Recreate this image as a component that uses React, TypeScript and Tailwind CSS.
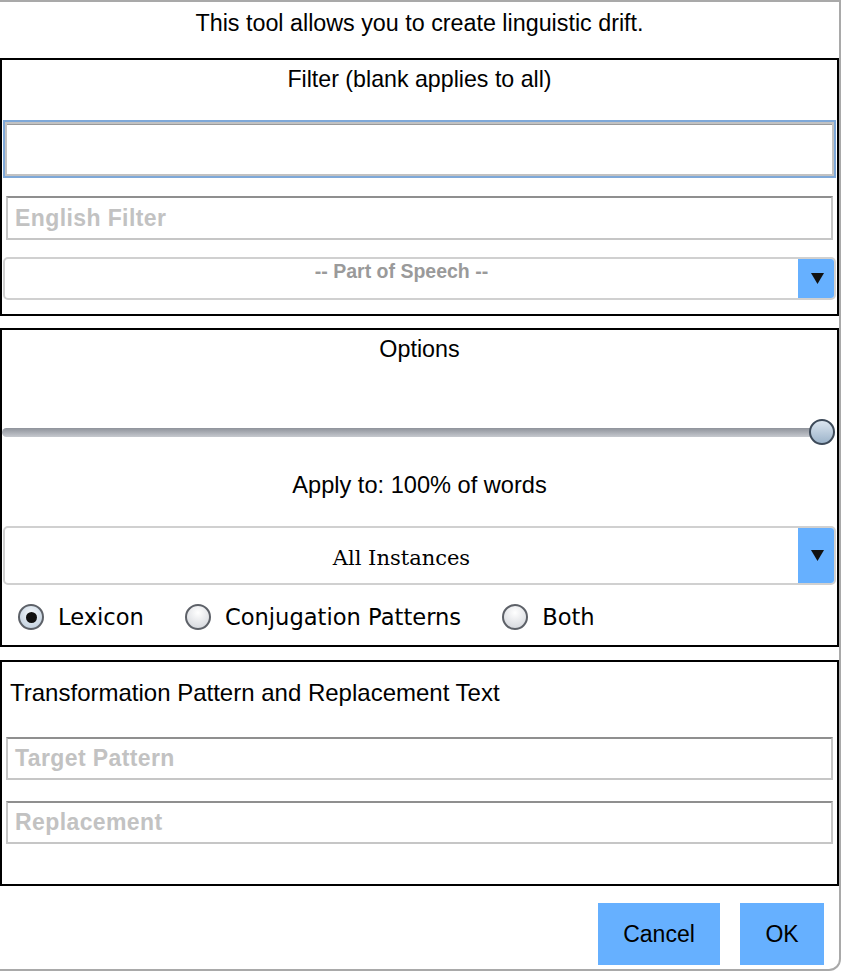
import React from "react";

const sans = "font-['Liberation_Sans',Arial,sans-serif]";

function TextBox({ placeholder, className }: { placeholder: string; className: string }) {
  return (
    <div
      className={`h-[43px] border-2 border-[#c6c6c6] border-t-[#8f8f8f] bg-white flex items-center pl-[7px] ${className}`}
    >
      <span className="text-[23px] font-bold text-[#c2c2c2] leading-none tracking-[0.4px]">{placeholder}</span>
    </div>
  );
}

function Select({ label, className, textClass }: { label: string; className: string; textClass: string }) {
  return (
    <div className={`flex rounded-[5px] border-2 border-[#d0d0d0] bg-white overflow-hidden ${className}`}>
      <div className="flex-1 flex items-center justify-center">
        <span className={textClass}>{label}</span>
      </div>
      <div className="w-[38px] -my-[2px] -mr-[2px] bg-[#66b0ff] flex items-center justify-center rounded-r-[5px]">
        <svg width="13" height="11" viewBox="0 0 13 11">
          <path d="M0 0 L13 0 L6.5 11 Z" fill="#111" />
        </svg>
      </div>
    </div>
  );
}

function Radio({ label, checked }: { label: string; checked?: boolean }) {
  return (
    <div className="flex items-center gap-[14px]">
      <div
        className={`w-[26px] h-[26px] rounded-full border-2 border-[#5d6168] flex items-center justify-center ${
          checked
            ? "bg-[radial-gradient(circle_at_50%_35%,#f4f8fc,#b9c9d9)]"
            : "bg-[radial-gradient(circle_at_50%_30%,#ffffff,#cfd2d8)]"
        }`}
      >
        {checked && <div className="w-[11px] h-[11px] rounded-full bg-[#111]" />}
      </div>
      <span className="font-['DejaVu_Sans',sans-serif] text-[22.6px] text-black leading-none">{label}</span>
    </div>
  );
}

export default function App() {
  return (
    <div className={`w-[842px] h-[972px] bg-white ${sans}`}>
      <div className="w-[841px] h-[971px] border-t-2 border-r-2 border-b-2 border-[#a9a9a9] rounded-br-[12px] bg-white flex flex-col">
        {/* ----------------------------- header ----------------------------- */}
        <div className="h-[56px] flex items-start justify-center pt-[10px]">
          <span className="text-[23.3px] text-black leading-none">This tool allows you to create linguistic drift.</span>
        </div>

        {/* ----------------------------- filter ----------------------------- */}
        <div className="w-[839px] border-2 border-black">
          <div className="h-[40px] flex items-center justify-center">
            <span className="text-[23.2px] text-black leading-none">Filter (blank applies to all)</span>
          </div>
          <div className="mt-[20px] mx-[1px] h-[58px] border-2 border-[#7ea8d8] shadow-[inset_0_0_0_2px_#c2c2c2,inset_0_3px_0_0_#9a9a9a] bg-white" />
          <TextBox placeholder="English Filter" className="mt-[18px] mx-[4px] h-[44px]" />
          <Select
            label="-- Part of Speech --"
            className="mt-[17px] mx-[1px] h-[43px]"
            textClass="text-[19.5px] font-bold text-[#9a9a9a] leading-none -mt-[13px]"
          />
          <div className="h-[14px]" />
        </div>

        {/* ----------------------------- options ----------------------------- */}
        <div className="mt-[12px] w-[839px] border-2 border-black">
          <div className="h-[40px] flex items-center justify-center">
            <span className="text-[23.3px] text-black leading-none">Options</span>
          </div>
          <div className="mt-[49px] h-[26px] relative flex items-center">
            <div className="w-[822px] h-[9px] rounded-full bg-gradient-to-b from-[#8f939b] to-[#c6c9cf]" />
            <div className="absolute left-[807px] top-0 w-[26px] h-[26px] rounded-full border-2 border-[#3d4a59] bg-gradient-to-b from-[#dce6f0] to-[#9db4ca]" />
          </div>
          <div className="mt-[21px] h-[40px] flex items-center justify-center">
            <span className="text-[23.6px] text-black leading-none">Apply to: 100% of words</span>
          </div>
          <Select
            label="All Instances"
            className="mt-[20px] mx-[1px] h-[59px]"
            textClass="font-['DejaVu_Serif',serif] text-[21px] text-black leading-none mt-[6px]"
          />
          <div className="mt-[17px] h-[30px] flex items-center pl-[16px] gap-[41px]">
            <Radio label="Lexicon" checked />
            <Radio label="Conjugation Patterns" />
            <Radio label="Both" />
          </div>
          <div className="h-[13px]" />
        </div>

        {/* ----------------------------- transformation ----------------------------- */}
        <div className="mt-[13px] w-[839px] border-2 border-black">
          <div className="mt-[11px] h-[40px] flex items-center pl-[8px]">
            <span className="text-[24px] text-black leading-none">Transformation Pattern and Replacement Text</span>
          </div>
          <TextBox placeholder="Target Pattern" className="mt-[24px] mx-[4px] h-[42px]" />
          <TextBox placeholder="Replacement" className="mt-[21px] mx-[4px] h-[43px]" />
          <div className="h-[40px]" />
        </div>

        {/* ----------------------------- buttons ----------------------------- */}
        <div className="mt-[17px] flex justify-end gap-[20px] pr-[15px]">
          <button className="w-[122px] h-[62px] bg-[#66b0ff] text-[23px] text-black">Cancel</button>
          <button className="w-[84px] h-[62px] bg-[#66b0ff] text-[23px] text-black">OK</button>
        </div>
      </div>
    </div>
  );
}
